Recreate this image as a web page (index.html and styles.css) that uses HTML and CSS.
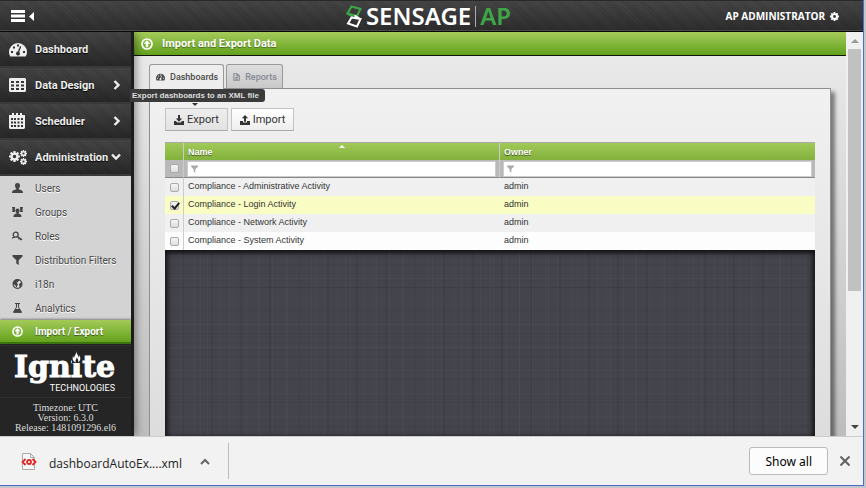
FILE: index.html
```html
<!DOCTYPE html>
<html lang="en">
<head>
<meta charset="utf-8">
<title>Import and Export Data</title>
<link rel="stylesheet" href="styles.css">
</head>
<body>
<svg class="sprite" aria-hidden="true">
  <symbol id="gauge" viewBox="0 0 18 15"><path fill="currentColor" fill-rule="evenodd" d="M9 1a9 9 0 0 0-9 9c0 2 .6 3 1.400 4.400h15.200C17.400 13 18 12 18 10A9 9 0 0 0 9 1zM2 9h2v2H2zM4 4.500h2v2H4zM8 2.500h2v2H8zM14 9h2v2h-2zM12.300 4.500 10.200 10a2 2 0 1 1-1.400-.4l2.300-5.500z"/></symbol>
  <symbol id="grid" viewBox="0 0 17 14"><path fill="currentColor" fill-rule="evenodd" d="M1 0h15l1 1v12l-1 1H1l-1-1V1zM2 3v2h3V3zM7 3v2h3V3zM12 3v2h3V3zM2 6.500v2h3v-2zM7 6.500v2h3v-2zM12 6.500v2h3v-2zM2 10v2h3v-2zM7 10v2h3v-2zM12 10v2h3v-2z"/></symbol>
  <symbol id="calendar" viewBox="0 0 16 16"><path fill="currentColor" fill-rule="evenodd" d="M3 0h2v2h2V0h2v2h2V0h2v2h3v13l-1 1H1l-1-1V2h3zM2 5v2h2V5zM5 5v2h2V5zM8.500 5v2h2V5zM12 5v2h2V5zM2 8.500v2h2v-2zM5 8.500v2h2v-2zM8.500 8.500v2h2v-2zM12 8.500v2h2v-2zM2 12v2h2v-2zM5 12v2h2v-2zM8.500 12v2h2v-2zM12 12v2h2v-2z"/></symbol>
  <symbol id="gear" viewBox="0 0 12 12"><circle cx="6" cy="6" r="3.200" fill="none" stroke="currentColor" stroke-width="2.600"/><path stroke="currentColor" stroke-width="2.400" d="M6 0v2.500M6 9.500V12M0 6h2.500M9.500 6H12M1.800 1.800l1.700 1.700M8.500 8.500l1.700 1.700M10.200 1.800 8.500 3.500M3.500 8.500l-1.700 1.700"/></symbol>
  <symbol id="gears" viewBox="0 0 18 15"><use href="#gear" x="0" y="1" width="11" height="11"/><use href="#gear" x="11" y="0" width="7" height="7"/><use href="#gear" x="11" y="8" width="7" height="7"/></symbol>
  <symbol id="user" viewBox="0 0 11 10"><path fill="currentColor" d="M5.500 0C7.300 0 8 1.200 8 2.500S7.400 5 6.800 5.500v.8C8.500 7 11 7.300 11 10H0c0-2.700 2.500-3 4.200-3.700v-.8C3.600 5 3 3.800 3 2.500S3.700 0 5.500 0z"/></symbol>
  <symbol id="users" viewBox="0 0 11 10"><path fill="currentColor" d="M5.500 1.500C7 1.500 7.600 2.500 7.600 3.600S7 5.500 6.500 6v.5c1.200.5 3 .7 3 3.500h-8c0-2.800 1.800-3 3-3.500V6c-.5-.5-1.100-1.300-1.100-2.400s.6-2.100 2.100-2.100zM0 0h3L2.800 5H0l.6-2zM11 0H8l.2 5H11l-.6-2z"/></symbol>
  <symbol id="key" viewBox="0 0 12 10"><g fill="none" stroke="currentColor" stroke-width="1.400"><circle cx="4" cy="3.500" r="2.700"/><path d="m6 5.500 5 3.500M7.800 7 7 8.500M9.500 8 8.800 9.500M0 7.500 3 6"/></g></symbol>
  <symbol id="funnel" viewBox="0 0 10 10"><path fill="currentColor" d="M0 0h10v1.400L6.200 5.300V10L3.800 8.500V5.300L0 1.400z"/></symbol>
  <symbol id="globe" viewBox="0 0 10 10"><circle cx="5" cy="5" r="4.400" fill="#ddd" stroke="currentColor" stroke-width="1.200"/><path fill="currentColor" d="M1 2.500 4 0l3 .8L5.500 3 4 3.500 5.500 5 4.200 8.500 2.500 6 .5 5zM6.500 5l2-1.500 1 .5-.5 3L7 8.500z"/></symbol>
  <symbol id="flask" viewBox="0 0 10 10"><path fill="none" stroke="currentColor" d="M2.500.5h5M4 .5v3.700L1 9.200h8L6 4.200V.5"/><path fill="currentColor" d="M2.900 6h4.200l2.200 3.700H.7z"/></symbol>
  <symbol id="up" viewBox="0 0 12 12"><circle cx="6" cy="6" r="5" fill="none" stroke="currentColor" stroke-width="1.700"/><path fill="currentColor" d="m6 2.300 3.300 3.500H7.200v3.500H4.800V5.800H2.700z"/></symbol>
  <symbol id="file" viewBox="0 0 8 9"><path fill="none" stroke="currentColor" stroke-width="1.200" d="M1 .7h3.700L7.200 3v5.300H1zM4.500.7V3.200h2.700M2.500 5h3M2.500 6.700h3"/></symbol>
  <symbol id="download" viewBox="0 0 10 10"><path fill="currentColor" d="M4 0h2v3.500h2.200L5 6.800 1.800 3.500H4zM0 6h1.800l1.700 1.600h3L8.200 6H10v4H0z"/></symbol>
  <symbol id="upload" viewBox="0 0 10 10"><path fill="currentColor" d="M4 6.800h2V3.300h2.200L5 0 1.800 3.300H4zM0 6h3v1.600h4V6h3v4H0z"/></symbol>
  <symbol id="right" viewBox="0 0 8 10"><path fill="none" stroke="currentColor" stroke-width="2.400" d="m1.500 1 4 4-4 4"/></symbol>
  <symbol id="down" viewBox="0 0 10 8"><path fill="none" stroke="currentColor" stroke-width="2.400" d="m1 1.500 4 4 4-4"/></symbol>
</svg>
<div class="window">
  <header class="topbar">
    <button class="menu-toggle" aria-label="Collapse menu"><svg width="25" height="12" viewBox="0 0 25 12"><path fill="#fff" d="M0 0h14v3H0zM0 4.500h14v3H0zM0 9h14v3H0zM23 2v9l-5-4.500z"/></svg></button>
    <div class="brand">
      <svg width="16" height="23" viewBox="0 0 16 23" fill="none" stroke-width="2"><path stroke="#3fa648" d="m5.500 1.500 9 2.500-3.500 7-9.500-2.500z"/><path stroke="#3fa648" d="m2 9 5 3"/><path stroke="#fff" d="m5.500 12.500 9 1.500L11 21.500l-9-3zM13.500 13.500 8.500 10.500"/></svg>
      <span>SENSAGE</span><i class="brand-rule"></i><span class="brand-ap">AP</span>
    </div>
    <button class="account">AP ADMINISTRATOR <svg width="9" height="9"><use href="#gear"/></svg></button>
  </header>
  <div class="body">
    <aside class="sidebar">
      <nav>
        <a class="main-item" href="#"><svg width="18" height="15"><use href="#gauge"/></svg>Dashboard</a>
        <a class="main-item" href="#"><svg width="17" height="14"><use href="#grid"/></svg>Data Design<svg width="8" height="10"><use href="#right"/></svg></a>
        <a class="main-item" href="#"><svg width="16" height="16"><use href="#calendar"/></svg>Scheduler<svg width="8" height="10"><use href="#right"/></svg></a>
        <a class="main-item" href="#"><svg width="18" height="15"><use href="#gears"/></svg>Administration<svg width="10" height="8"><use href="#down"/></svg></a>
        <div class="submenu">
          <a href="#"><svg width="11" height="10"><use href="#user"/></svg>Users</a>
          <a href="#"><svg width="11" height="10"><use href="#users"/></svg>Groups</a>
          <a href="#"><svg width="11" height="10"><use href="#key"/></svg>Roles</a>
          <a href="#"><svg width="11" height="10"><use href="#funnel"/></svg>Distribution Filters</a>
          <a href="#"><svg width="11" height="10"><use href="#globe"/></svg>i18n</a>
          <a href="#"><svg width="11" height="10"><use href="#flask"/></svg>Analytics</a>
          <a class="active" href="#"><svg width="11" height="11"><use href="#up"/></svg>Import / Export</a>
        </div>
      </nav>
      <div class="vendor">
        <svg class="flame" width="9" height="12" viewBox="0 0 11 12" preserveAspectRatio="none"><path fill="#fff" d="M5 0c.5 3 3 4 3 6.500 1-.5 1-1.500.8-2.500C11 6.500 10.500 10 7.500 11.500c.8-2-.3-3-1.500-5-1 2-2.500 3-1.200 5C1 10.500 0 7.500 1.300 5c.2 1 .5 1.700 1.200 2C3 4.500 5.500 3.500 5 0z"/></svg>
        <div class="vendor-name">Ignite</div>
        <div class="vendor-sub">TECHNOLOGIES</div>
      </div>
      <div class="version">Timezone: UTC<br>Version: 6.3.0<br>Release: 1481091296.el6</div>
    </aside>
    <main class="content">
      <h1 class="title"><svg width="12" height="12"><use href="#up"/></svg>Import and Export Data</h1>
      <div class="page">
        <div class="tabs">
          <button class="tab selected"><svg width="9" height="8"><use href="#gauge"/></svg>Dashboards</button>
          <button class="tab"><svg width="7" height="8"><use href="#file"/></svg>Reports</button>
        </div>
        <section class="panel">
          <div class="actions">
            <button class="action hover"><svg width="10" height="10"><use href="#download"/></svg>Export<span class="tooltip" role="tooltip">Export dashboards to an XML file</span></button>
            <button class="action"><svg width="10" height="10"><use href="#upload"/></svg>Import</button>
          </div>
          <table class="list">
            <colgroup><col class="col-check"><col class="col-name"><col></colgroup>
            <thead>
              <tr class="heads"><th></th><th><div class="head">Name<i class="sort"></i></div></th><th>Owner</th></tr>
              <tr class="filters">
                <td><input type="checkbox" aria-label="Select all"></td>
                <td><label class="filter"><svg width="7" height="8"><use href="#funnel"/></svg><input type="text" aria-label="Filter by name"></label></td>
                <td><label class="filter"><svg width="7" height="8"><use href="#funnel"/></svg><input type="text" aria-label="Filter by owner"></label></td>
              </tr>
            </thead>
            <tbody>
              <tr><td><input id="r1" type="checkbox"></td><td><label for="r1">Compliance - Administrative Activity</label></td><td>admin</td></tr>
              <tr class="picked"><td><input id="r2" type="checkbox" checked></td><td><label for="r2">Compliance - Login Activity</label></td><td>admin</td></tr>
              <tr><td><input id="r3" type="checkbox"></td><td><label for="r3">Compliance - Network Activity</label></td><td>admin</td></tr>
              <tr><td><input id="r4" type="checkbox"></td><td><label for="r4">Compliance - System Activity</label></td><td>admin</td></tr>
            </tbody>
          </table>
          <div class="empty"></div>
        </section>
      </div>
    </main>
    <div class="scrollbar"><i class="sb-up"></i><div class="thumb"></div><i class="sb-down"></i></div>
  </div>
  <footer class="downloads">
    <svg width="16" height="17" viewBox="0 0 16 17"><path fill="#f7f7f7" stroke="#aaa" d="M1.500.5h8l4 4v12h-12zM9.500.5v4h4"/><path fill="none" stroke="#e3261f" stroke-width="1.800" d="M4.500 6 1.500 9l3 3M11.500 6l3 3-3 3"/><circle cx="8" cy="9" r="2" fill="none" stroke="#e3261f" stroke-width="1.800"/></svg>
    <span class="file-name">dashboardAutoEx....xml</span>
    <button aria-label="File options"><svg width="10" height="7" viewBox="0 0 10 7"><path fill="none" stroke="#666" stroke-width="2" d="m1 6 4-4 4 4"/></svg></button>
    <i class="rule"></i>
    <button class="show-all">Show all</button>
    <button aria-label="Close"><svg width="10" height="10" viewBox="0 0 10 10"><path stroke="#606060" stroke-width="2" d="m.5.5 9 9M9.500.5l-9 9"/></svg></button>
  </footer>
</div>
</body>
</html>
```
FILE: styles.css
```css
* { box-sizing: border-box; }
body {
  margin: 0;
  height: 100vh;
  padding: 0 2px 2px 0;
  background: #c4c6cc;
  font-family: Roboto, "Liberation Sans", sans-serif;
  font-size: 10px;
}
button { font: inherit; margin: 0; padding: 0; border: 0; background: none; }
a { color: inherit; text-decoration: none; }
svg { display: block; flex: none; }
.sprite { display: none; }

.window {
  height: 100%;
  display: flex;
  flex-direction: column;
  overflow: hidden;
  border-right: 1px solid #4a6fc0;
  border-bottom: 1px solid #4a6fc0;
}

.topbar {
  flex: none;
  height: 32px;
  display: grid;
  grid-template-columns: 1fr auto 1fr;
  align-items: center;
  padding: 0 24px 0 11px;
  color: #fff;
  border-top: 1px solid #292929;
  border-bottom: 1px solid #080808;
  background: repeating-linear-gradient(45deg, #0000 0 1px, #0002 1px 2px), linear-gradient(#484848, #2e2e2e);
  box-shadow: inset 0 -1px #4a4a4a;
}
.brand { display: flex; align-items: center; gap: 4px; margin-left: 7px; font-family: "Noto Sans", sans-serif; font-size: 24px; line-height: 28px; font-weight: 600; }
.brand-rule { width: 1px; height: 21px; background: #aaa; }
.brand-ap { color: #3fa648; }
.account { justify-self: end; display: flex; align-items: center; gap: 5px; color: #fff; font-family: "Open Sans", sans-serif; font-size: 10px; font-weight: 700; }

.body { flex: 1; min-height: 0; display: flex; overflow: hidden; }
.sidebar { flex: none; width: 134px; border-right: 3px solid #1d1d1d; background: #252525; color: #eee; z-index: 1; box-shadow: 2px 0 8px #0006; }
.main-item {
  height: 36px;
  display: grid;
  grid-template-columns: 26px 1fr auto;
  align-items: center;
  padding: 0 10px 0 9px;
  font-size: 11px;
  font-weight: 700;
  text-shadow: 0 1px 1px #000;
  border-bottom: 2px solid #393939;
  background: repeating-linear-gradient(45deg, #0000 0 1px, #0002 1px 2px), linear-gradient(#474747, #292929);
}
.submenu { background: #d3d3d3; color: #444; }
.submenu a { height: 24px; display: flex; align-items: center; gap: 12px; padding-left: 12px; text-shadow: 0 1px #fff; }
.submenu .active { color: #fff; font-weight: 700; text-shadow: 0 1px 1px #0008; background: linear-gradient(#a3ca57, #64a21d); border-bottom: 2px solid #3c7410; box-shadow: 0 -1px 2px #0006; }
.vendor { position: relative; margin-top: 1px; height: 53px; padding: 4px 16px 0 14px; text-align: right; color: #fff; border-top: 1px solid #303030; border-bottom: 1px solid #303030; }
.vendor-name { font-family: "DejaVu Serif", serif; font-weight: 700; font-size: 30px; line-height: 34px; -webkit-text-stroke: 1px #fff; }
.vendor-sub { font-size: 9px; line-height: 9px; }
.flame { position: absolute; left: 72px; top: 5px; background: #252525; }
.version { padding-top: 5px; text-align: center; font-family: "Liberation Serif", serif; font-size: 10px; line-height: 10px; color: #ddd; }

.content { flex: 1; min-width: 0; display: flex; flex-direction: column; background: linear-gradient(#ececec, #bdbdbd); }
.title { flex: none; height: 24px; margin: 0; display: flex; align-items: center; gap: 9px; padding-left: 7px; color: #fff; font-size: 11px; font-weight: 700; text-shadow: 0 1px 1px #0006; border-bottom: 1px solid #111; background: linear-gradient(#a5cb5b, #62a11c); }
.page { flex: 1; min-height: 0; display: flex; flex-direction: column; padding: 8px 15px 0; }
.tabs { display: flex; gap: 2px; height: 24px; }
.tab { display: flex; align-items: center; gap: 5px; padding: 0 5px 0 6px; color: #858994; font-size: 9px; font-weight: 500; border: 1px solid #999; border-bottom: 0; border-radius: 3px 3px 0 0; background: linear-gradient(#dedede, #c9c9c9); }
.tab.selected { position: relative; z-index: 1; height: 25px; color: #4a4a4a; background: #ededed; }
.panel { flex: 1; min-height: 0; display: flex; flex-direction: column; padding: 19px 15px 0; border: 1px solid #8f8f8f; border-bottom: 0; background: linear-gradient(#f1f1f1, #ddd); box-shadow: 4px 4px 4px #0007; }
.actions { display: flex; gap: 3px; }
.action { position: relative; height: 23px; width: 63px; display: flex; align-items: center; justify-content: center; gap: 3px; color: #333; font-size: 11px; border: 1px solid #c4c4c4; border-bottom-color: #aaa; background: linear-gradient(#fff, #eee); }
.action.hover { background: linear-gradient(#eee, #e2e2e2); }
.tooltip { position: absolute; z-index: 2; right: -38px; bottom: 28px; padding: 0 6px 0 2px; line-height: 13px; font-size: 9px; font-family: "Liberation Sans", sans-serif; font-size: 8px; font-weight: 700; white-space: nowrap; color: #ddd; background: #3b3b3b; border-radius: 0 3px 3px 0; }
.tooltip::after { content: ""; position: absolute; right: 67px; top: 14px; border: 3px solid transparent; border-top-color: #333; border-bottom: 0; }

.list { width: 100%; margin-top: 11px; table-layout: fixed; border-collapse: separate; border-spacing: 0; border-top: 1px solid #aaa; color: #333; font-family: "Liberation Sans", sans-serif; font-size: 9px; }
.col-check { width: 19px; }
.col-name { width: 316px; }
.list td { height: 18px; padding: 0 4px 2px; line-height: 12px; }
.list th { height: 17px; padding: 0 4px; text-align: left; line-height: 12px; }
.list td:first-child, .list th:first-child { padding: 0; border-right: 1px solid #ccc; }
.list th:nth-child(2), .filters td:nth-child(2) { border-right: 1px solid #ccc; }
.heads { color: #fff; text-shadow: 0 1px 1px #0008; background: linear-gradient(#a1ca58, #82b13c); }
.head { position: relative; }
.sort { position: absolute; left: 151px; top: -1px; border: 3px solid transparent; border-top: 0; border-bottom-color: #fff; }
.filters { background: #b9b9b9; }
.list .filters td { padding-bottom: 0; border-bottom: 1px solid #888; }
.filter { height: 14px; display: flex; align-items: center; padding-left: 3px; color: #aaa; background: #fff; box-shadow: 0 0 0 1px #ccc; }
.filter input { flex: 1; min-width: 0; height: 12px; padding: 0 4px; border: 0; outline: 0; background: none; font: inherit; }
tbody tr { background: #fdfdfd; }
tbody tr:nth-child(odd) { background: #f0f0f0; }
tbody .picked { background: #f9fcc3; }
input[type=checkbox] { appearance: none; display: block; width: 9px; height: 9px; margin: 0 auto; border: 1px solid #aaa; border-radius: 2px; background: linear-gradient(#f6f6f6, #ddd); }
input[type=checkbox]:checked::after { content: ""; display: block; width: 3px; height: 6px; margin: -1px 0 0 2px; border: solid #222; border-width: 0 2px 2px 0; transform: rotate(40deg); }
.empty {
  flex: 1;
  box-shadow: inset 0 3px 5px #111, inset 6px 0 6px -3px #222, inset -6px 0 6px -3px #222;
  background:
    repeating-linear-gradient(90deg, #0000 0 6px, #ffffff06 6px 7px, #0000 7px 17px, #00000010 17px 19px, #0000 19px 29px),
    repeating-linear-gradient(90deg, #0000 0 3px, #ffffff05 3px 4px, #0000 4px 13px),
    repeating-linear-gradient(#0000 0 5px, #ffffff06 5px 6px, #0000 6px 14px, #00000010 14px 15px, #0000 15px 23px),
    repeating-linear-gradient(#0000 0 2px, #00000008 2px 3px, #0000 3px 7px),
    #44444d;
}

.scrollbar { flex: none; width: 17px; display: flex; flex-direction: column; align-items: center; background: #f0f0f0; }
.scrollbar i { width: 0; height: 0; border: 4px solid transparent; }
.scrollbar .sb-up { margin-top: 7px; border-top: 0; border-bottom-color: #999; }
.thumb { width: 13px; height: 60%; margin-top: 6px; background: #c1c1c1; }
.scrollbar .sb-down { margin: auto 0 7px; border-bottom: 0; border-top-color: #444; }

.downloads { flex: none; height: 49px; display: flex; align-items: center; padding: 0 13px 0 21px; border-top: 1px solid #ccc; background: #f2f2f2; font-family: "Noto Sans", sans-serif; font-size: 12px; color: #222; }
.file-name { margin: 4px 18px 0 12px; font-family: "Open Sans", sans-serif; }
.rule { width: 1px; height: 36px; margin-left: 18px; background: #bbb; }
.show-all { height: 28px; padding: 0 15px; margin: 0 12px 0 auto; border: 1px solid #bbb; border-radius: 3px; background: #fcfcfc; color: #000; }
```
